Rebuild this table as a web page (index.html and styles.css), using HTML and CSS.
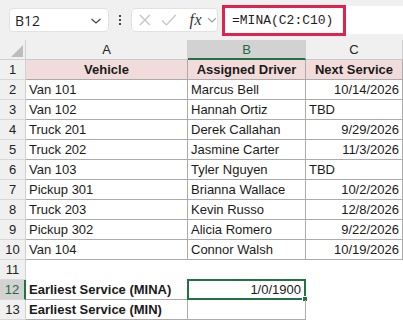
FILE: index.html
```html
<!DOCTYPE html>
<html>
<head>
<meta charset="utf-8">
<link rel="stylesheet" href="styles.css">
</head>
<body>
<div class="toolbar">
  <div class="namebox">
    <span class="ref">B12</span>
    <svg class="chev" width="12" height="8" viewBox="0 0 12 8"><path d="M1.5 2 L6 6 L10.5 2" fill="none" stroke="#444" stroke-width="1.3"/></svg>
  </div>
  <div class="dots"><i></i><i></i><i></i></div>
  <div class="fxbox">
    <svg width="16" height="16" viewBox="0 0 16 16" class="ico"><path d="M3 3 L13 13 M13 3 L3 13" stroke="#c4c4c4" stroke-width="1.3" fill="none"/></svg>
    <svg width="18" height="16" viewBox="0 0 18 16" class="ico"><path d="M2 8.5 L6.5 13 L16 3" stroke="#c4c4c4" stroke-width="1.3" fill="none"/></svg>
    <span class="fx">fx</span>
    <svg class="chev2" width="10" height="6" viewBox="0 0 10 6"><path d="M1 1 L5 5 L9 1" fill="none" stroke="#999" stroke-width="1.1"/></svg>
  </div>
  <div class="formula">
    <div class="redbox">=MINA(C2:C10)</div>
  </div>
</div>
<div class="grid">
  <div class="corner"><svg width="12" height="12" viewBox="0 0 12 12"><path d="M12 0 L12 12 L0 12 Z" fill="#bdbdbd"/></svg></div>
  <div class="ch">A</div>
  <div class="ch sel">B</div>
  <div class="ch">C</div>

  <div class="rh">1</div><div class="c hd">Vehicle</div><div class="c hd">Assigned Driver</div><div class="c hd">Next Service</div>
  <div class="rh">2</div><div class="c">Van 101</div><div class="c">Marcus Bell</div><div class="c r">10/14/2026</div>
  <div class="rh">3</div><div class="c">Van 102</div><div class="c">Hannah Ortiz</div><div class="c">TBD</div>
  <div class="rh">4</div><div class="c">Truck 201</div><div class="c">Derek Callahan</div><div class="c r">9/29/2026</div>
  <div class="rh">5</div><div class="c">Truck 202</div><div class="c">Jasmine Carter</div><div class="c r">11/3/2026</div>
  <div class="rh">6</div><div class="c">Van 103</div><div class="c">Tyler Nguyen</div><div class="c">TBD</div>
  <div class="rh">7</div><div class="c">Pickup 301</div><div class="c">Brianna Wallace</div><div class="c r">10/2/2026</div>
  <div class="rh">8</div><div class="c">Truck 203</div><div class="c">Kevin Russo</div><div class="c r">12/8/2026</div>
  <div class="rh">9</div><div class="c">Pickup 302</div><div class="c">Alicia Romero</div><div class="c r">9/22/2026</div>
  <div class="rh">10</div><div class="c">Van 104</div><div class="c">Connor Walsh</div><div class="c r">10/19/2026</div>
  <div class="rh">11</div><div class="e"></div><div class="e"></div><div class="e"></div>
  <div class="rh rsel">12</div><div class="c b">Earliest Service (MINA)</div><div class="c r active">1/0/1900<span class="handle"></span></div><div class="e"></div>
  <div class="rh">13</div><div class="c b">Earliest Service (MIN)</div><div class="c"></div><div class="e"></div>
</div>
</body>
</html>
```
FILE: styles.css
```css
* { box-sizing: border-box; }
html, body { margin: 0; padding: 0; background: #fff; }
body {
  width: 403px;
  height: 322px;
  overflow: hidden;
  font-family: "Liberation Sans", Arial, sans-serif;
  color: #1a1a1a;
}
.toolbar {
  height: 40px;
  background: #f0f0f0;
  display: flex;
  align-items: center;
  padding-left: 9px;
}
.namebox {
  width: 100px;
  height: 24px;
  background: #fff;
  border: 1px solid #e2e2e2;
  border-radius: 4px;
  display: flex;
  align-items: center;
  justify-content: space-between;
  padding: 0 6px 0 5px;
  font-family: "Open Sans", "Liberation Sans", sans-serif;
  font-size: 14px;
  color: #222;
}
.chev { margin-top: 1px; }
.dots {
  width: 22px;
  display: flex;
  flex-direction: column;
  align-items: center;
  gap: 2px;
}
.dots i { display: block; width: 2px; height: 2px; background: #444; }
.fxbox {
  width: 87px;
  height: 24px;
  background: #fff;
  border: 1px solid #e2e2e2;
  border-radius: 4px;
  display: flex;
  align-items: center;
  padding-left: 5px;
  gap: 7px;
}
.fx {
  font-family: "Liberation Serif", "DejaVu Serif", serif;
  font-style: italic;
  font-size: 16px;
  color: #333;
  margin-left: 5px;
  letter-spacing: 0.5px;
}
.chev2 { margin-left: -2px; }
.formula {
  flex: 1;
  height: 28px;
  margin-left: 4px;
  background: #fff;
  display: flex;
  align-items: center;
}
.redbox {
  width: 124px;
  height: 31px;
  border: 3px solid #e0234e;
  background: #fff;
  font-family: "Liberation Mono", "DejaVu Sans Mono", monospace;
  font-size: 13px;
  color: #1e1e1e;
  display: flex;
  align-items: center;
  padding-left: 7px;
  padding-top: 1px;
}
.grid {
  display: grid;
  grid-template-columns: 26px 162px 118px 97px;
  grid-template-rows: 20px repeat(13, 20px);
  font-size: 13px;
}
.corner {
  background: #f0f0f0;
  border-right: 1px solid #d0d0d0;
  border-bottom: 1px solid #d0d0d0;
  display: flex;
  align-items: flex-end;
  justify-content: flex-end;
  padding: 0 2px 2px 0;
}
.ch {
  background: #f0f0f0;
  border-right: 1px solid #d0d0d0;
  border-bottom: 1px solid #c8c8c8;
  text-align: center;
  line-height: 19px;
  font-family: "Liberation Sans", sans-serif;
  color: #222;
  font-size: 13px;
}
.ch.sel {
  background: #d2d2d2;
  color: #1d6b3e;
  border-bottom: 2px solid #217346;
}
.rh {
  background: #f0f0f0;
  border-right: 1px solid #d0d0d0;
  border-bottom: 1px solid #d8d8d8;
  text-align: center;
  line-height: 20px;
  color: #222;
  font-size: 13px;
}
.rh.rsel {
  background: #d2d2d2;
  color: #1d6b3e;
  border-right: 2px solid #217346;
}
.c {
  border-right: 1px solid #ababab;
  border-bottom: 1px solid #ababab;
  padding: 0 3px;
  line-height: 20px;
  white-space: nowrap;
  overflow: hidden;
  position: relative;
}
.c.hd {
  background: #f2dcdb;
  font-weight: bold;
  text-align: center;
}
.c.r { text-align: right; }
.c.b { font-weight: bold; }
.e { background: #fff; }
.c.active {
  border: 2px solid #217346;
  margin: -1px 0 0 -1px;
  width: calc(100% + 1px);
  height: 21px;
  line-height: 17px;
  overflow: visible;
}
.handle {
  position: absolute;
  right: -4px;
  bottom: -4px;
  width: 6px;
  height: 6px;
  background: #217346;
  border: 1px solid #fff;
}
```
